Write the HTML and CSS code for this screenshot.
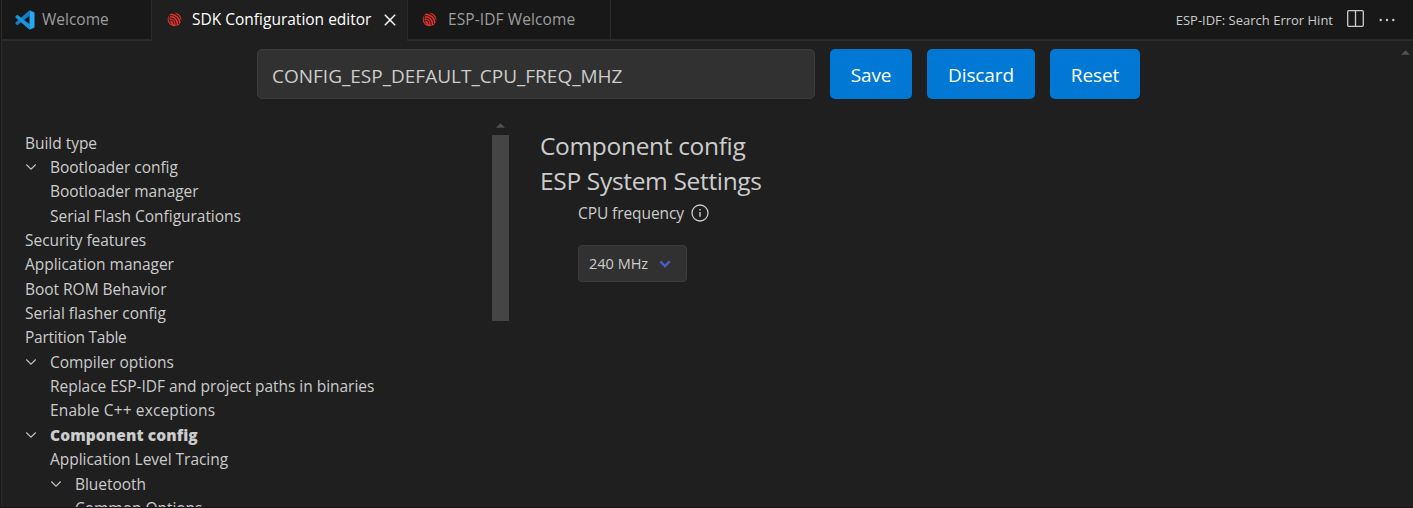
FILE: index.html
```html
<!DOCTYPE html>
<html lang="en">
<head>
<meta charset="utf-8">
<title>SDK Configuration editor</title>
<link rel="stylesheet" href="styles.css">
</head>
<body>
<svg class="defs" width="0" height="0" aria-hidden="true">
  <symbol id="esp" viewBox="0 0 16 16">
    <circle cx="8" cy="8" r="7.3" fill="#e0342c"/>
    <g fill="none" stroke="#2c1818" stroke-width="1.1">
      <path d="M5.2 1.200C10.200 1.500 14.400 5.600 14.900 10.600"/>
      <path d="M3.600 3.700C8.800 3.600 12.500 7.400 12.500 12.900"/>
      <path d="M3.400 6.300C7.300 6.200 9.900 8.900 9.900 14.300"/>
      <path d="M3.600 8.800C6.200 8.800 7.500 10.400 7.300 13.100"/>
      <path d="M3.400 3.400C1.400 6 1.900 10.600 5 13"/>
    </g>
    <circle cx="4.900" cy="11.300" r="1" fill="#e0342c"/>
  </symbol>
  <symbol id="chev" viewBox="0 0 12 12"><path d="M1.300 3.500 6 8.200l4.700-4.700" fill="none" stroke="#c5c5c5" stroke-width="1.100"/></symbol>
</svg>
<div class="editor">
  <header class="tabs">
    <div class="tab welcome">
      <svg class="vs" viewBox="0 0 20 20"><path d="M14.500.300 19.500 2.600V17.400l-5 2.300z" fill="#29a8f2"/><path d="M14.500.300 15 5.500 2.300 15.300.500 13.800v-1.300z" fill="#0f7fca"/><path d="M14.500 19.700 15 14.500 2.300 4.700.500 6.200v1.300z" fill="#1e93dc"/></svg>
      <span>Welcome</span>
    </div>
    <div class="tab active">
      <svg class="esp"><use href="#esp"/></svg>
      <span>SDK Configuration editor</span>
      <svg class="close" viewBox="0 0 12 12"><path d="M.800.800l10.400 10.400M11.200.800.800 11.200" stroke="#fff" stroke-width="1.500"/></svg>
    </div>
    <div class="tab idf">
      <svg class="esp"><use href="#esp"/></svg>
      <span>ESP-IDF Welcome</span>
    </div>
    <div class="actions">
      <span class="hint">ESP-IDF: Search Error Hint</span>
      <svg class="split" viewBox="0 0 17 17"><rect x=".700" y=".700" width="15.600" height="15.600" rx="1.200" fill="none" stroke="#ccc" stroke-width="1.300"/><path d="M8.500 1v15" stroke="#ccc" stroke-width="1.300"/></svg>
      <svg class="more" viewBox="0 0 16 4"><g fill="#ccc"><circle cx="1.700" cy="2" r="1.200"/><circle cx="8" cy="2" r="1.200"/><circle cx="14.300" cy="2" r="1.200"/></g></svg>
    </div>
  </header>
  <main class="page">
    <svg class="page-arrow" viewBox="0 0 10 5"><path d="M0 5 5 0l5 5z" fill="#505050"/></svg>
    <div class="toolbar">
      <div class="search"><span>CONFIG_ESP_DEFAULT_CPU_FREQ_MHZ</span></div>
      <div class="btn save"><span>Save</span></div>
      <div class="btn discard"><span>Discard</span></div>
      <div class="btn reset"><span>Reset</span></div>
    </div>
    <div class="columns">
      <nav class="tree">
        <div class="row"><span>Build type</span></div>
        <div class="row"><svg><use href="#chev"/></svg><span>Bootloader config</span></div>
        <div class="row child"><span>Bootloader manager</span></div>
        <div class="row child"><span>Serial Flash Configurations</span></div>
        <div class="row"><span>Security features</span></div>
        <div class="row"><span>Application manager</span></div>
        <div class="row"><span>Boot ROM Behavior</span></div>
        <div class="row"><span>Serial flasher config</span></div>
        <div class="row"><span class="tight">Partition Table</span></div>
        <div class="row"><svg><use href="#chev"/></svg><span>Compiler options</span></div>
        <div class="row child"><span>Replace ESP-IDF and project paths in binaries</span></div>
        <div class="row child"><span class="loose">Enable C++ exceptions</span></div>
        <div class="row"><svg><use href="#chev"/></svg><span class="bold">Component config</span></div>
        <div class="row child"><span>Application Level Tracing</span></div>
        <div class="row child"><svg><use href="#chev"/></svg><span>Bluetooth</span></div>
        <div class="row grandchild"><span>Common Options</span></div>
      </nav>
      <div class="scroll">
        <svg viewBox="0 0 10 5"><path d="M0 5 5 0l5 5z" fill="#505050"/></svg>
        <div class="thumb"></div>
      </div>
      <section class="settings">
        <h2>Component config</h2>
        <h2>ESP System Settings</h2>
        <div class="label"><span>CPU frequency</span>
          <svg viewBox="0 0 18 18"><circle cx="9" cy="9" r="8" fill="none" stroke="#ccc" stroke-width="1.300"/><path d="M9 8v4.800M9 5v1.600" stroke="#ccc" stroke-width="1.400"/></svg>
        </div>
        <div class="select"><span>240 MHz</span>
          <svg viewBox="0 0 12 8"><path d="M1.300 1.300 6 6l4.700-4.700" fill="none" stroke="#485fc7" stroke-width="2.400"/></svg>
        </div>
      </section>
    </div>
  </main>
</div>
</body>
</html>
```
FILE: styles.css
```css
* { box-sizing: border-box; }
body {
  margin: 0;
  height: 508px;
  overflow: hidden;
  background: #1f1f1f;
  color: #ccc;
  font: 15.5px "Open Sans", "Noto Sans", sans-serif;
}
span { white-space: nowrap; }
svg { display: block; flex: none; }
.defs { position: absolute; }
.editor {
  height: 508px;
  display: flex;
  flex-direction: column;
  border-left: 1px solid #181818;
  border-bottom: 1px solid #1b1217;
  overflow: hidden;
}
.tabs {
  display: flex;
  height: 41px;
  flex: none;
  border-left: 1px solid #2b2b2b;
}
.tab {
  display: flex;
  align-items: center;
  background: #181818;
  border-right: 1px solid #2b2b2b;
  border-bottom: 2px solid #2b2b2b;
  color: #9d9d9d;
}
.tab span { margin-top: -1px; }
.welcome { width: 150px; padding-left: 13px; }
.active {
  width: 256px;
  padding: 0 0 2px 15px;
  background: #1f1f1f;
  border-bottom: 0;
  color: #fff;
}
.idf { width: 203px; padding-left: 14px; }
.idf span { letter-spacing: .1px; margin-left: 1px; }
.vs { width: 20px; height: 20px; margin-right: 7px; }
.esp { width: 15px; height: 15px; margin-right: 10px; }
.close { width: 12px; height: 12px; margin-left: auto; margin-right: 11px; }
.actions {
  flex: 1;
  display: flex;
  align-items: center;
  justify-content: flex-end;
  padding-right: 18px;
  background: #181818;
  border-bottom: 2px solid #2b2b2b;
}
.hint { font-size: 13px; }
.split { width: 17px; height: 17px; margin: 0 15px 2px 14px; }
.more { width: 16px; height: 4px; }
.page {
  position: relative;
  flex: 1;
  min-height: 0;
  display: flex;
  flex-direction: column;
  border-left: 1px solid #2b2b2b;
}
.page-arrow { position: absolute; right: 3px; top: 9px; width: 9px; height: 5px; }
.toolbar { display: flex; gap: 15px; height: 50px; margin: 8px 0 0 255px; flex: none; }
.search {
  width: 558px;
  display: flex;
  align-items: center;
  padding: 3px 0 0 14px;
  background: #313131;
  border: 1px solid #3c3c3c;
  border-radius: 5px;
  font-size: 19px;
}
.btn {
  display: flex;
  align-items: center;
  justify-content: center;
  padding-top: 2px;
  background: #0078d4;
  border-radius: 5px;
  color: #fff;
  font-size: 19px;
  letter-spacing: -.1px;
}
.save { width: 82px; }
.discard { width: 108px; }
.reset { width: 90px; }
.columns { display: flex; flex: 1; min-height: 0; margin-top: 20px; }
.tree { width: 490px; padding: 11.5px 0 0 23px; flex: none; overflow: hidden; letter-spacing: -.03px; }
.row { display: flex; align-items: center; height: 24.37px; line-height: 24.37px; }
.row svg { width: 12px; height: 12px; margin-right: 13px; }
.child { padding-left: 25px; }
.grandchild { padding-left: 50px; }
.bold { font-weight: 800; letter-spacing: .1px; }
.tight { letter-spacing: -.25px; }
.loose { letter-spacing: .13px; }
.scroll { width: 17px; flex: none; display: flex; flex-direction: column; align-items: center; }
.scroll svg { width: 9px; height: 5px; margin-top: 4px; }
.thumb { width: 17px; height: 186px; margin-top: 7px; background: #454545; }
.settings { padding: 9px 0 0 31px; }
h2 { margin: 0; font-size: 24.5px; font-weight: 400; height: 35px; line-height: 35px; letter-spacing: -.33px; }
.label { display: flex; align-items: center; height: 26px; margin: 2px 0 0 38px; letter-spacing: -.08px; }
.label svg { width: 18px; height: 18px; margin-left: 7px; }
.select {
  display: flex;
  align-items: center;
  width: 109px;
  height: 37px;
  margin: 19px 0 0 38px;
  padding-left: 10px;
  background: #313131;
  border: 1px solid #3c3c3c;
  border-radius: 4px;
  font-size: 14.5px;
}
.select svg { width: 12px; height: 8px; margin-left: 11px; }
```
